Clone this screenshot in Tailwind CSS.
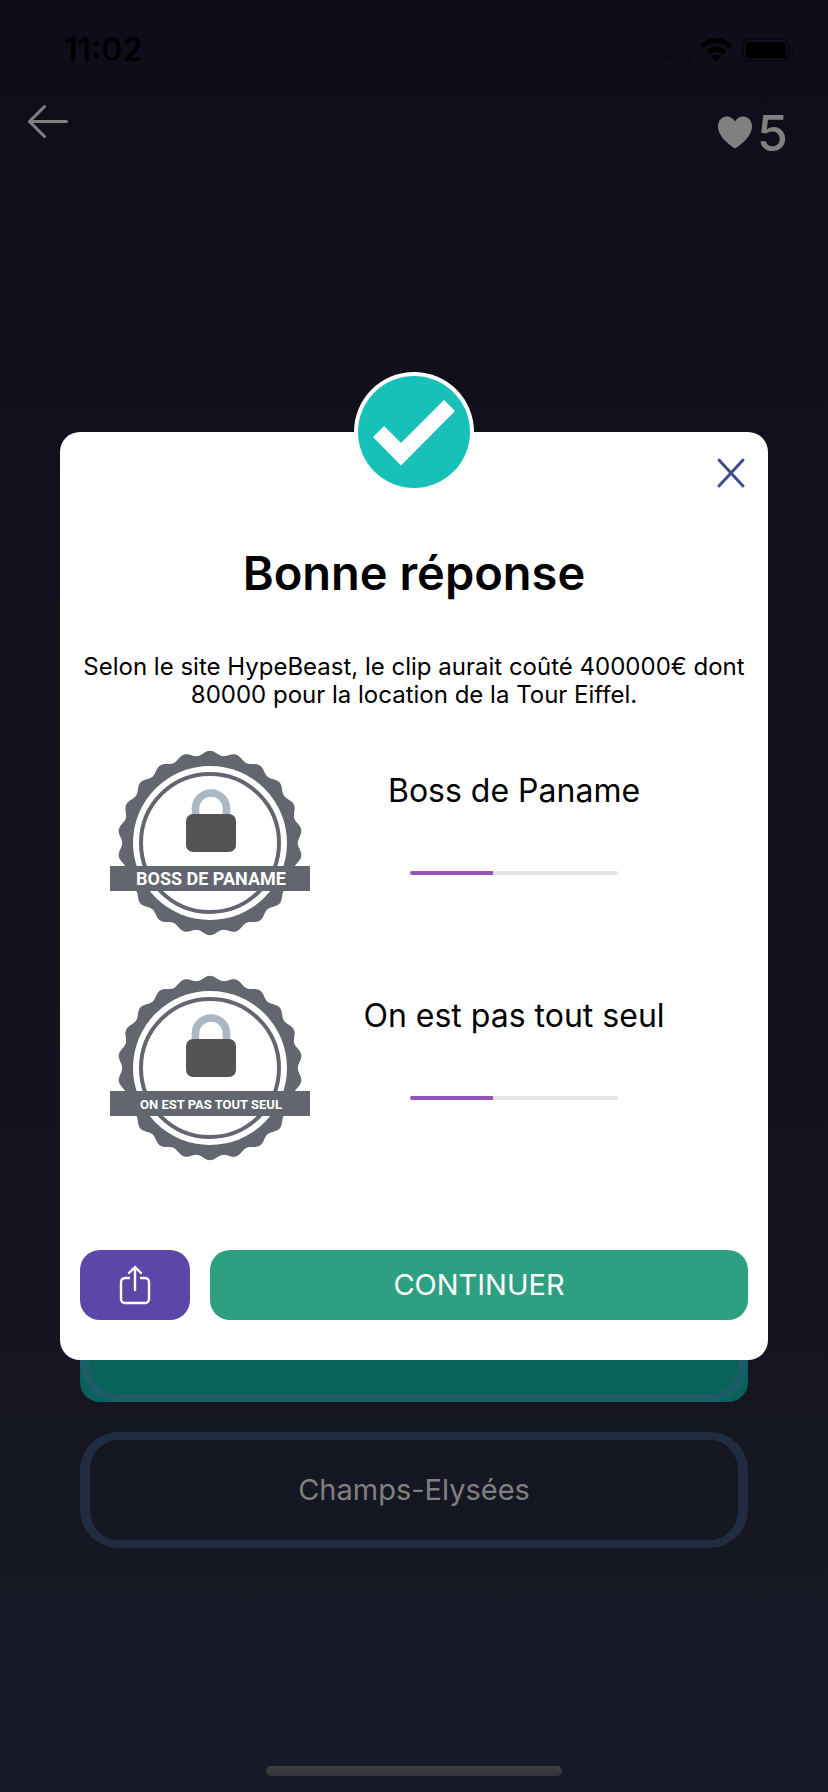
<!DOCTYPE html>
<html lang="fr">
<head>
<meta charset="utf-8">
<meta name="viewport" content="width=device-width, initial-scale=1">
<title>Bonne réponse</title>
<script src="https://cdn.jsdelivr.net/npm/@tailwindcss/browser@4"></script>
</head>
<body class="bg-[#100d1a] font-[Inter,'Liberation_Sans',sans-serif]">
<div class="relative flex min-h-screen flex-col bg-linear-to-b from-[#100d1a] via-[#12121d] to-[#171926]">

  <!-- Status bar -->
  <div class="flex h-[98px] items-center justify-between pt-0.5 pr-8 pl-16">
    <span class="text-[32px] leading-none font-semibold text-black">11:02</span>
    <svg class="h-6 w-[142px]" viewBox="0 0 142 24" aria-hidden="true">
      <g fill="#0c0a14"><circle cx="4" cy="20" r="3.5"/><circle cx="14" cy="20" r="3.5"/><circle cx="24" cy="20" r="3.5"/><circle cx="34" cy="20" r="3.5"/></g>
      <g fill="none" stroke="#000" stroke-width="5"><path d="M48 8.500a20 20 0 0 1 28.500 0"/><path d="M54 14.500a11.800 11.800 0 0 1 16.500 0"/></g>
      <path d="M57.500 18.500a7 7 0 0 1 9.500 0L62.200 23.500Z"/>
      <rect x="89" y="1" width="46" height="22" rx="7" fill="none" stroke="#08060e" stroke-width="2"/>
      <rect x="92" y="4" width="40" height="16.500" rx="4"/>
      <path d="M138 8a5 5 0 0 1 0 8Z" fill="#08060e"/>
    </svg>
  </div>

  <!-- Header -->
  <header class="flex h-[70px] items-start justify-between pr-10 pl-7">
    <button type="button" aria-label="Retour" class="mt-1 text-[#808080]">
      <svg class="h-10 w-10" viewBox="0 0 40 40" fill="none" stroke="currentColor" stroke-width="3" stroke-linecap="round" stroke-linejoin="round"><path d="M38.500 19.500H1.500M16.500 4.500l-15 15 15 15"/></svg>
    </button>
    <div class="mt-2 flex items-center gap-1 text-[#808080]">
      <svg class="h-9 w-9" viewBox="0 0 36 36" fill="currentColor" aria-label="Vies"><path d="M18 33.500C11 29 1 21 1 11.500 1 5.500 5 1.500 10 1.500c3.500 0 6.500 2 8 5 1.500-3 4.500-5 8-5 5 0 9 4 9 10C35 21 25 29 18 33.500Z"/></svg>
      <span class="text-[50px] leading-[54px] font-medium">5</span>
    </div>
  </header>

  <!-- Answers -->
  <main class="flex flex-1 flex-col justify-end gap-[30px] px-20 pb-[218px]">
    <button type="button" aria-label="Bonne réponse choisie" class="rounded-[20px] bg-[#09625a]">
      <span class="block h-[116px] rounded-[38px] border-x-[10px] border-y-8 border-[#1a5f66]"></span>
    </button>
    <button type="button" class="h-[116px] rounded-[38px] border-x-[10px] border-y-8 border-[#212c40] text-[29px] text-[#808080]">Champs-Elysées</button>
  </main>
  <div class="flex justify-center pb-4"><div class="h-2.5 w-[296px] rounded-full bg-linear-to-b from-[#404041] to-[#333338]"></div></div>

  <!-- Result dialog -->
  <div class="absolute inset-x-0 top-[432px] px-[60px]">
    <section role="dialog" aria-labelledby="title" class="relative flex flex-col rounded-[20px] bg-white px-5 pt-5 pb-10 text-black">
      <svg class="absolute -top-[60px] left-1/2 h-[120px] w-[120px] -translate-x-1/2" viewBox="0 0 120 120" aria-hidden="true">
        <circle cx="60" cy="60" r="60" fill="#fff"/><circle cx="60" cy="60" r="56" fill="#17c1b7"/>
        <path d="M30 54 47 71 90 28 101 39 47 93.500 19 65Z" fill="#fff"/>
      </svg>
      <button type="button" aria-label="Fermer" class="self-end text-[#3f4c88]">
        <svg class="h-11 w-9" viewBox="0 0 36 44" fill="none" stroke="currentColor" stroke-width="3" stroke-linecap="round"><path d="M7 8 31 34M31 8 7 34"/></svg>
      </button>
      <h1 id="title" class="mt-12 text-center text-[47px] leading-[58px] font-semibold">Bonne réponse</h1>
      <p class="-mx-2 mt-[51px] text-center text-[24px] leading-7">Selon le site HypeBeast, le clip aurait coûté 400000€ dont 80000 pour la location de la Tour Eiffel.</p>

      <ul class="mt-[34px] flex flex-col gap-[25px] px-[30px]">
        <li class="flex h-[200px]">
          <svg class="h-[200px] w-[200px] shrink-0" viewBox="0 0 200 200">
            <path data-seal fill="#63666e"/>
            <circle cx="100" cy="100" r="77" fill="#fff"/><circle cx="100" cy="100" r="69" fill="none" stroke="#63666e" stroke-width="4"/>
            <path d="M85.500 72V65.500a15.500 15.500 0 0 1 31 0v7" fill="none" stroke="#a9b8c2" stroke-width="7.600"/>
            <rect x="76" y="71" width="50" height="38" rx="7" fill="#545454"/>
            <rect y="123" width="200" height="25" fill="#63666e"/>
            <text x="101" y="142" text-anchor="middle" fill="#fff" font-family="Roboto, Liberation Sans, sans-serif" font-weight="700" font-size="18">BOSS DE PANAME</text>
          </svg>
          <div class="flex flex-1 flex-col items-center pt-7">
            <h2 class="text-[32px] leading-10 whitespace-nowrap">Boss de Paname</h2>
            <div role="progressbar" aria-label="Boss de Paname" aria-valuenow="40" class="mt-15 h-1 w-[208px] overflow-hidden rounded-full bg-[#e3e3e3]"><div class="h-full bg-[#9654ba]" style="width:40%"></div></div>
          </div>
        </li>
        <li class="flex h-[200px]">
          <svg class="h-[200px] w-[200px] shrink-0" viewBox="0 0 200 200">
            <path data-seal fill="#63666e"/>
            <circle cx="100" cy="100" r="77" fill="#fff"/><circle cx="100" cy="100" r="69" fill="none" stroke="#63666e" stroke-width="4"/>
            <path d="M85.500 72V65.500a15.500 15.500 0 0 1 31 0v7" fill="none" stroke="#a9b8c2" stroke-width="7.600"/>
            <rect x="76" y="71" width="50" height="38" rx="7" fill="#545454"/>
            <rect y="123" width="200" height="25" fill="#63666e"/>
            <text x="101" y="141" text-anchor="middle" fill="#fff" font-family="Roboto, Liberation Sans, sans-serif" font-weight="700" font-size="13">ON EST PAS TOUT SEUL</text>
          </svg>
          <div class="flex flex-1 flex-col items-center pt-7">
            <h2 class="text-[32px] leading-10 whitespace-nowrap">On est pas tout seul</h2>
            <div role="progressbar" aria-label="On est pas tout seul" aria-valuenow="40" class="mt-15 h-1 w-[208px] overflow-hidden rounded-full bg-[#e3e3e3]"><div class="h-full bg-[#9654ba]" style="width:40%"></div></div>
          </div>
        </li>
      </ul>

      <div class="mt-[82px] flex gap-5">
        <button type="button" aria-label="Partager" class="flex h-[70px] w-[110px] items-center justify-center rounded-[20px] bg-[#5a47a7] text-white">
          <svg class="h-10 w-8" viewBox="0 0 32 40" fill="none" stroke="currentColor" stroke-width="2.400" stroke-linecap="round" stroke-linejoin="round"><path d="M11 13H6a4 4 0 0 0-4 4v17a4 4 0 0 0 4 4h20a4 4 0 0 0 4-4V17a4 4 0 0 0-4-4h-5" stroke-linecap="butt"/><path d="M16 25V2M10 8l6-6 6 6"/></svg>
        </button>
        <button type="button" class="h-[70px] flex-1 rounded-[20px] bg-[#2da082] text-[29px] text-white">CONTINUER</button>
      </div>
    </section>
  </div>
</div>
<script>
  // Scalloped seal outline: 22 waves around a circle
  const pts = [];
  for (let i = 0; i < 528; i++) {
    const a = i * Math.PI / 264, r = 90 + 2.2 * Math.cos(22 * a);
    pts.push((100 + r * Math.sin(a)).toFixed(2) + ' ' + (100 - r * Math.cos(a)).toFixed(2));
  }
  document.querySelectorAll('[data-seal]').forEach(p => p.setAttribute('d', 'M' + pts.join('L') + 'Z'));
</script>
</body>
</html>
